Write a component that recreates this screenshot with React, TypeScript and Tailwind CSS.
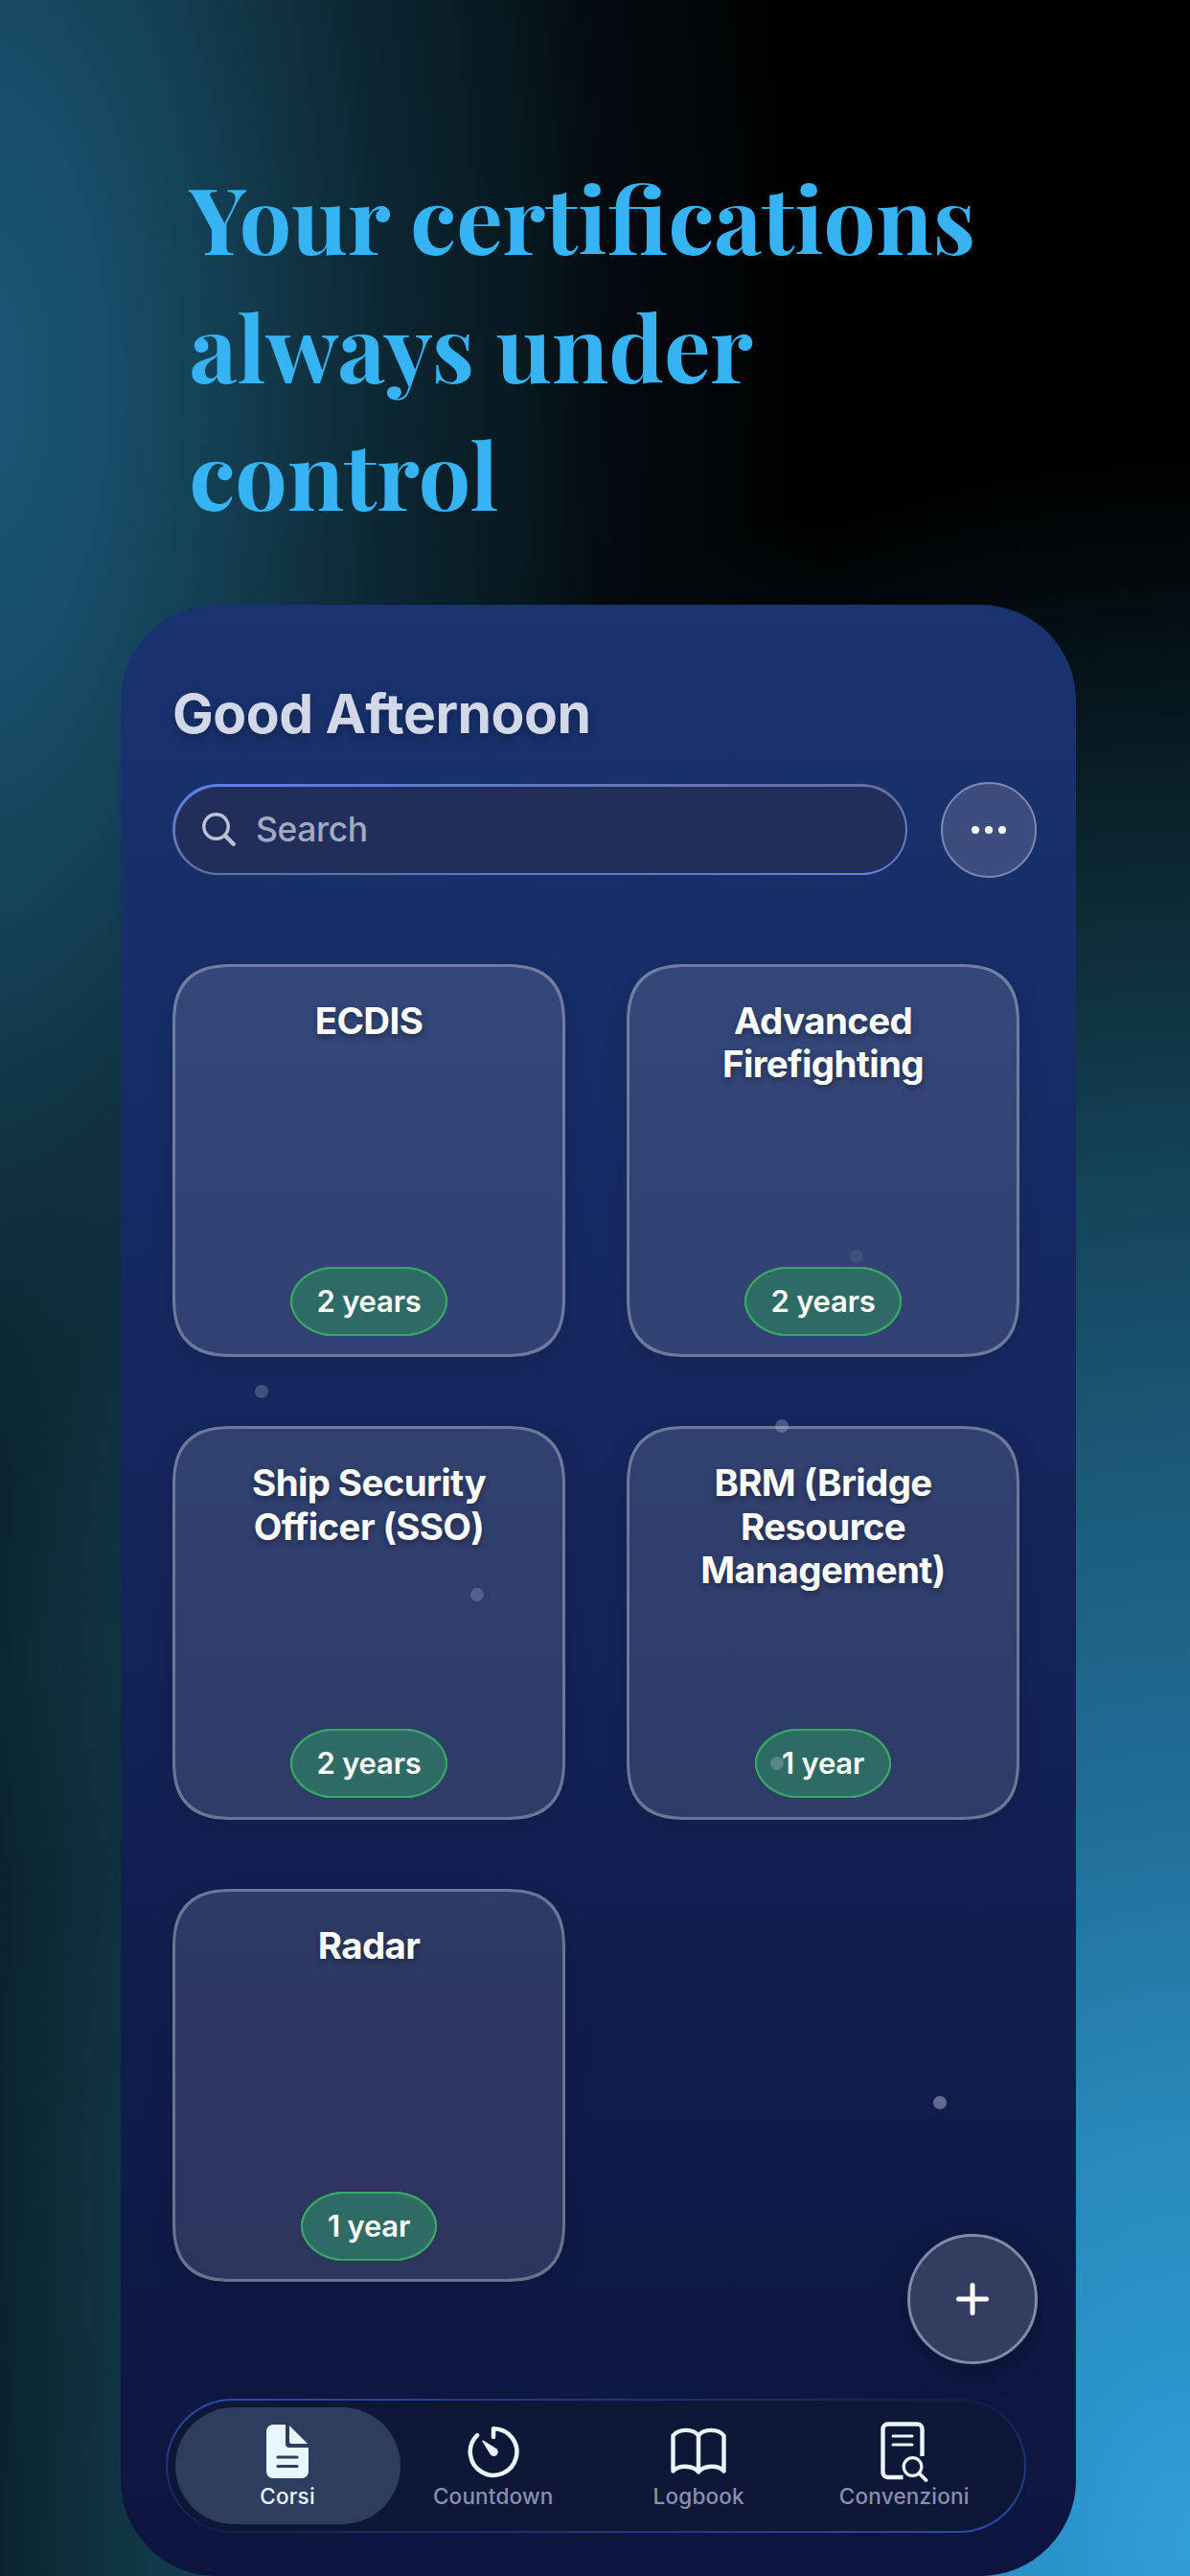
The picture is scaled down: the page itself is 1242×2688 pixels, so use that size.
const courses = [
  { title: "ECDIS", validity: "2 years" },
  { title: "Advanced Firefighting", validity: "2 years" },
  { title: "Ship Security Officer (SSO)", validity: "2 years" },
  { title: "BRM (Bridge Resource Management)", validity: "1 year" },
  { title: "Radar", validity: "1 year" },
];

// floating particles, drawn over the cards
const particles = [
  "left-[887px] top-[1304px] opacity-10",
  "left-[266px] top-[1445px] opacity-25",
  "left-[809px] top-[1481px] opacity-30",
  "left-[491px] top-[1657px] opacity-25",
  "left-[804px] top-[1833px] opacity-30",
  "left-[974px] top-[2187px] opacity-45",
];

function SearchIcon() {
  return (
    <svg className="size-9" viewBox="0 0 36 36" fill="none" stroke="#bfc2d6" strokeLinecap="round">
      <circle cx="14.500" cy="14.500" r="12.700" strokeWidth="3.400" />
      <path d="M24 24L32.700 32.700" strokeWidth="4.400" />
    </svg>
  );
}

function DocIcon() {
  return (
    <svg className="h-14 w-11" viewBox="0 0 44 56" fill="#e9f5ff">
      <path d="M7 0H20V20a4 4 0 0 0 4 4H44V49a7 7 0 0 1-7 7H7a7 7 0 0 1-7-7V7a7 7 0 0 1 7-7Z" />
      <path d="M24 1L43 20H26a2 2 0 0 1-2-2Z" />
      <path d="M12 34H32M12 43.500H32" stroke="#2e3c5e" strokeWidth="3.200" strokeLinecap="round" />
    </svg>
  );
}

function TimerIcon() {
  return (
    <svg className="h-14 w-14" viewBox="0 0 56 56" fill="none" stroke="#e9f5ff">
      <path d="M28 13V4.200A24.300 24.300 0 1 1 11 11.200" strokeWidth="4.500" strokeLinecap="round" strokeLinejoin="round" />
      <path d="M17 17.200L31 25.800A3.700 3.700 0 1 1 25.600 31Z" fill="#e9f5ff" strokeWidth="1.500" strokeLinejoin="round" />
    </svg>
  );
}

function BookIcon() {
  return (
    <svg className="h-14 w-15" viewBox="0 0 60 56" fill="none" stroke="#e9f5ff" strokeWidth="4.400" strokeLinecap="round" strokeLinejoin="round">
      <path d="M30 11.500C25 4 9 4 3.500 11.500V48.500C9 42 24 42 30 49.500C36 42 51 42 56.500 48.500V11.500C51 4 35 4 30 11.500V49" />
    </svg>
  );
}

function DocSearchIcon() {
  return (
    <svg className="h-16 w-[50px]" viewBox="0 0 50 64" fill="none" stroke="#e9f5ff" strokeLinecap="round">
      <path d="M43.500 37V8.500a5 5 0 0 0-5-5H7.500a5 5 0 0 0-5 5V54a5 5 0 0 0 5 5H23.500" strokeWidth="4.400" strokeLinecap="butt" />
      <path d="M13 16H33M13 25H33" strokeWidth="3" />
      <circle cx="33.500" cy="48" r="9.300" strokeWidth="3.200" />
      <path d="M40.500 55L47.500 62" strokeWidth="3.800" />
    </svg>
  );
}

const tabs = [
  { label: "Corsi", icon: DocIcon, active: true },
  { label: "Countdown", icon: TimerIcon },
  { label: "Logbook", icon: BookIcon },
  { label: "Convenzioni", icon: DocSearchIcon },
];

export default function App() {
  return (
    <div className="relative h-[2688px] w-[1242px] overflow-hidden bg-black bg-[radial-gradient(ellipse_1540px_2200px_at_1242px_2650px,#319fd8_0%,#2a94ca_9%,#2888ba_20%,#216f99_34%,#1c5e7e_48%,#14465c_63%,#0d2c38_77%,#05141a_89%,#020709_94%,#000000_100%),radial-gradient(ellipse_880px_2100px_at_-20px_400px,#1a5675_0%,#174e68_15%,#123b4d_32%,#0c2733_48%,#07181f_65%,#040b10_75%,#010304_92%,#000000_100%)] bg-blend-screen pt-[160px] font-[Inter,sans-serif]">
      <h1 className="ml-[197.500px] font-['Playfair_Display','Liberation_Serif',serif] text-[96.500px] leading-[133.600px] font-bold whitespace-nowrap text-[#36b3f3]">
        <span className="block">Your certifications</span>
        <span className="block">always under</span>
        <span className="block">control</span>
      </h1>

      <main className="mt-[70px] ml-[126px] flex h-[2057px] w-[997px] flex-col rounded-[100px] bg-linear-to-b from-[#19336f] via-[#14265c] via-45% to-[#0c153d] pr-[41px] pl-[54px]">
        <h2 className="mt-[78px] text-[57px] leading-[72px] font-bold tracking-[-0.500px] text-[#d3d8e8] text-shadow-[0_4px_10px_rgb(0_0_0/0.25)]">
          Good Afternoon
        </h2>

        <div className="mt-[35px] flex items-center gap-[35px]">
          <div className="h-[95px] w-[767px] rounded-full bg-linear-to-br from-[#5d82e6] via-[#6370a0] to-[#5d82e6] p-[2.500px]">
            <div className="flex h-full items-center gap-[20px] rounded-full bg-[#212e5a] pl-[28.500px] text-[35.500px] font-medium tracking-[-0.400px] text-[#a3a9c1]">
              <SearchIcon />
              Search
            </div>
          </div>
          <button className="flex size-[100px] items-center justify-center gap-[6.500px] rounded-full border-2 border-[#7d89b2] bg-[#3c4c7d]">
            <span className="size-[7.500px] rounded-full bg-white" />
            <span className="size-[7.500px] rounded-full bg-white" />
            <span className="size-[7.500px] rounded-full bg-white" />
          </button>
        </div>

        <section className="mt-[90px] grid grid-cols-[410px_410px] gap-x-[64px] gap-y-[72px]">
          {courses.map((course) => (
            <article
              key={course.title}
              className="flex h-[410.500px] flex-col items-center justify-between rounded-[64px] border-3 border-white/30 bg-white/12 px-[50px] pt-[34px] pb-[19.500px] shadow-[0_6px_24px_rgb(0_0_0/0.10)] [corner-shape:superellipse(1.400)]"
            >
              <h3 className="text-center text-[38.500px] leading-[45.600px] font-bold tracking-[-0.650px] text-white text-shadow-[0_3px_6px_rgb(0_0_0/0.35)]">
                {course.title}
              </h3>
              <span className="flex h-[72px] items-center rounded-[44px/50%] border-2 border-[#3aa665] bg-[#2f6b65] px-[25.500px] text-[31px] font-semibold tracking-[-0.200px] text-white [corner-shape:superellipse(0.950)]">
                {course.validity}
              </span>
            </article>
          ))}
        </section>

        <nav className="mt-[121.500px] -ml-[7px] h-[140px] w-[898px] shrink-0 rounded-full bg-linear-to-br from-[#2b4fb4] from-0% via-[#131d48] via-50% to-[#2b4fb4] to-100% p-[2px]">
          <div className="flex h-full rounded-full bg-[#0f1736] px-[17.500px] py-[7px]">
            {tabs.map(({ label, icon: Icon, active }) => (
              <div
                key={label}
                className={
                  active
                    ? "-mx-[10px] flex w-[235px] flex-col items-center rounded-full bg-[#2e3c5e] text-[#eaf3fc]"
                    : "flex w-[214.500px] flex-col items-center text-[#888fb3]"
                }
              >
                <div className="mt-[15px] flex h-[62px] items-center">
                  <Icon />
                </div>
                <span className="mt-[2.500px] text-[22.500px] leading-[28px] font-medium tracking-[0.200px]">{label}</span>
              </div>
            ))}
          </div>
        </nav>
      </main>

      <button className="absolute top-[2331px] left-[946.500px] flex size-[136px] items-center justify-center rounded-full border-3 border-[#8389a6] bg-[#323d60] shadow-[0_8px_30px_rgb(0_0_0/0.25)]">
        <svg className="size-[38px]" viewBox="0 0 38 38" stroke="white" strokeWidth="5" strokeLinecap="round">
          <path d="M19 4.500V33.500M4.500 19H33.500" />
        </svg>
      </button>

      {particles.map((place) => (
        <span key={place} className={`absolute size-[14px] rounded-full bg-[#c3c9e0] ${place}`} />
      ))}
    </div>
  );
}
